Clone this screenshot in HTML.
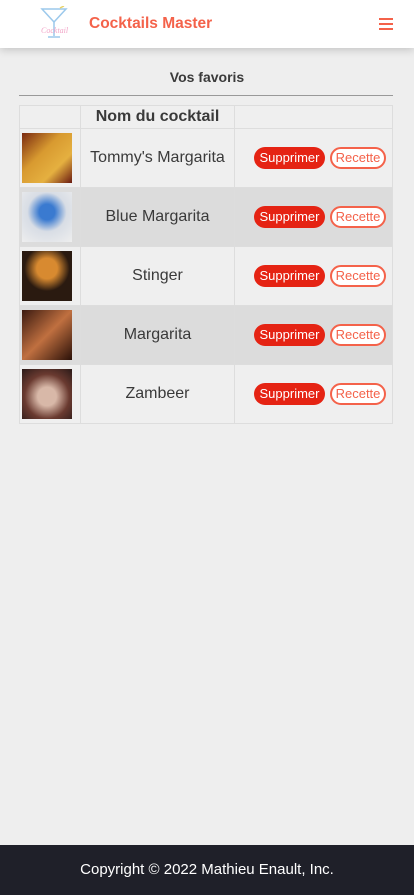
<!DOCTYPE html>
<html><head><meta charset="utf-8"><style>
*{box-sizing:border-box;margin:0;padding:0}
body{width:414px;height:895px;background:#eeeeee;font-family:"Liberation Sans",sans-serif;position:relative;overflow:hidden}
.nav{position:absolute;left:0;top:0;width:414px;height:48px;background:#fff;box-shadow:0 2px 8px rgba(0,0,0,.18)}
.brand{position:absolute;left:89px;top:15px;font-weight:bold;font-size:15.5px;color:#f4624a}
.burger{position:absolute;left:379px;top:18px;width:14px}
.burger i{display:block;height:2px;background:#f4624a;margin-bottom:3px}
h2{position:absolute;top:69px;left:0;width:414px;text-align:center;font-size:14px;color:#3a3a3a;font-weight:bold}
.hr{position:absolute;left:19px;top:95px;width:374px;height:1px;background:#999}
table{position:absolute;left:19px;top:105px;border-collapse:collapse;width:374px}
td,th{border:1px solid #ddd;text-align:center;color:#3a3a3a}
th{height:23px;font-size:16px;background:#efefef}
td{height:59px;font-size:16px}
td.a{text-align:right;padding-right:6px}
td.i{padding:0}
tr.o td{background:#efefef}tr.e td{background:#dcdcdc}
.img{width:50px;height:50px;display:block;margin:0 0 0 2px}
.b1{display:inline-block;background:#e52313;color:#fff;border-radius:11px;height:22px;line-height:22px;font-size:13px;width:71px;text-align:center}
.b2{display:inline-block;background:#fff;color:#f4624a;border:2px solid #f4624a;border-radius:11px;height:22px;line-height:18px;font-size:13px;width:56px;margin-left:5px;text-align:center}
.foot{position:absolute;left:0;top:845px;width:414px;height:50px;background:#1f2029;color:#fff;text-align:center;line-height:50px;font-size:15px}
</style></head><body>
<div class="nav">
<svg style="position:absolute;left:40px;top:6px" width="28" height="34" viewBox="0 0 28 34"><path d="M2 3L26 3L14 16Z" fill="none" stroke="#9cc9ec" stroke-width="1.5"/><path d="M14 16V30M8 31H20" stroke="#9cc9ec" stroke-width="1.5"/><path d="M20 2L24 0" stroke="#e8d36a" stroke-width="1.5"/><text x="1" y="27" font-size="8" fill="#f2a6c8" font-style="italic" font-family="Liberation Serif,serif">Cocktails</text></svg>
<div class="brand">Cocktails Master</div>
<div class="burger"><i></i><i></i><i></i></div>
</div>
<h2>Vos favoris</h2>
<div class="hr"></div>
<table>
<tr><th style="width:61px"></th><th style="width:154px">Nom du cocktail</th><th></th></tr>
<tr class="o"><td class="i"><div class="img" style="background:linear-gradient(135deg,#7a2a10,#d89a30 40%,#e5b040 70%,#6a1a10)"></div></td><td>Tommy's Margarita</td><td class="a"><span class="b1">Supprimer</span><span class="b2">Recette</span></td></tr>
<tr class="e"><td class="i"><div class="img" style="background:radial-gradient(circle at 50% 40%,#3a7ad0 20%,#d8dde5 50%,#eee)"></div></td><td>Blue Margarita</td><td class="a"><span class="b1">Supprimer</span><span class="b2">Recette</span></td></tr>
<tr class="o"><td class="i"><div class="img" style="background:radial-gradient(circle at 50% 35%,#d88a30 25%,#2a1a10 55%)"></div></td><td>Stinger</td><td class="a"><span class="b1">Supprimer</span><span class="b2">Recette</span></td></tr>
<tr class="e"><td class="i"><div class="img" style="background:linear-gradient(135deg,#3a1a10,#c07040 50%,#2a1008)"></div></td><td>Margarita</td><td class="a"><span class="b1">Supprimer</span><span class="b2">Recette</span></td></tr>
<tr class="o"><td class="i"><div class="img" style="background:radial-gradient(circle at 50% 55%,#d8b8a8 25%,#6a3a30 60%,#2a1a18)"></div></td><td>Zambeer</td><td class="a"><span class="b1">Supprimer</span><span class="b2">Recette</span></td></tr>
</table>
<div class="foot">Copyright © 2022 Mathieu Enault, Inc.</div>
</body></html>
